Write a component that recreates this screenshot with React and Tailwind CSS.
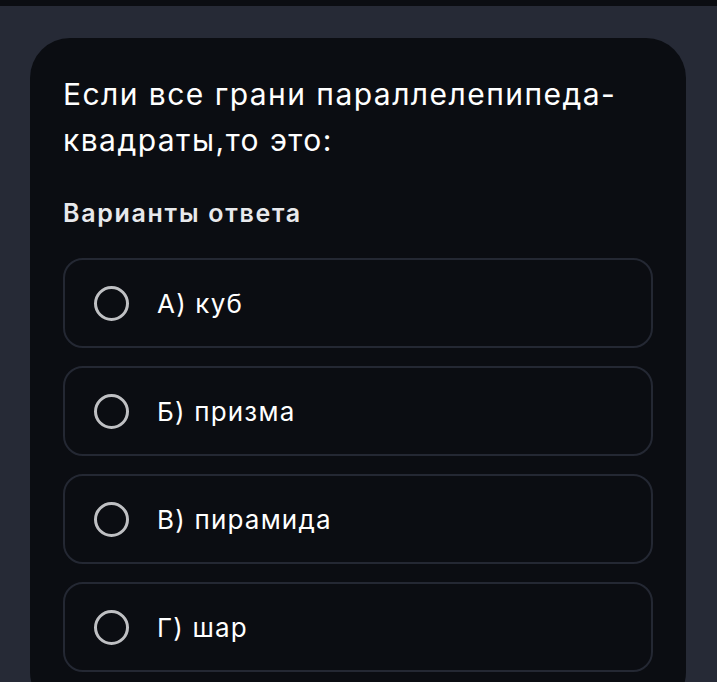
import React, { useState } from 'react';

const options = ['А) куб', 'Б) призма', 'В) пирамида', 'Г) шар'];

const App = () => {
  const [selected, setSelected] = useState(null);

  return (
    <div className="h-[682px] overflow-hidden bg-[#262a36]" style={{ fontFamily: 'Inter, "Noto Sans", sans-serif' }}>
      {/* top strip */}
      <div className="h-[6px] bg-[#0b0d12]" />

      <div className="px-[30px] pt-[32px]">
        <div className="rounded-[40px] bg-[#0b0d12] px-[33px] pt-[33px] pb-10 w-[656px]">
          <h1 className="text-[30px] leading-[46px] text-white font-normal tracking-[1.45px]">
            Если все грани параллелепипеда-
            <br />
            квадраты,то это:
          </h1>

          <h2 className="mt-[35px] text-[25px] leading-[30px] font-semibold text-[#e8e9ec] tracking-[1.7px]">
            Варианты ответа
          </h2>

          <div className="mt-[30px] flex flex-col gap-[18px]">
            {options.map((opt, i) => (
              <button
                key={i}
                onClick={() => setSelected(i)}
                className="h-[90px] w-full rounded-[20px] border-2 border-[#242833] flex items-center pl-[29px] text-left"
              >
                <span className="w-[35px] h-[35px] rounded-full border-[3px] border-[#bfc0c3] flex items-center justify-center">
                  {selected === i && <span className="w-[17px] h-[17px] rounded-full bg-[#bfc0c3]" />}
                </span>
                <span className="ml-[28px] text-[26px] text-white tracking-[1.2px]">{opt}</span>
              </button>
            ))}
          </div>
        </div>
      </div>
    </div>
  );
};

export default App;
